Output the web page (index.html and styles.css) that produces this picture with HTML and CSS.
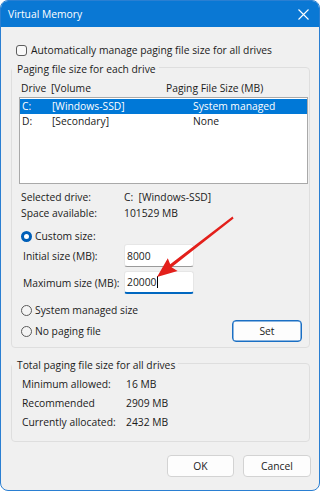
FILE: index.html
```html
<!DOCTYPE html>
<html>
<head>
<meta charset="utf-8">
<link rel="stylesheet" href="styles.css">
</head>
<body>
<div class="window">
  <div class="titlebar">
    <span class="title">Virtual Memory</span>
    <svg class="close" width="11" height="11" viewBox="0 0 11 11"><path d="M0.5 0.5 L10.5 10.5 M10.5 0.5 L0.5 10.5" stroke="#fff" stroke-width="1.1" fill="none"/></svg>
  </div>
  <div class="body">
    <div class="check-row"><span class="checkbox"></span><span>Automatically manage paging file size for all drives</span></div>

    <fieldset class="group g1">
      <legend>Paging file size for each drive</legend>
      <div class="group-body">
        <div class="cols header"><span>Drive</span><span>[Volume</span><span>Paging File Size (MB)</span></div>
        <div class="listbox">
          <div class="cols row selected"><span>C:</span><span>[Windows-SSD]</span><span>System managed</span></div>
          <div class="cols row"><span>D:</span><span>[Secondary]</span><span>None</span></div>
        </div>
        <div class="info">
          <span>Selected drive:</span><span>C:&nbsp; [Windows-SSD]</span>
          <span>Space available:</span><span>101529 MB</span>
        </div>
        <div class="radio-row custom"><span class="radio checked"></span><span>Custom size:</span></div>
        <div class="field first"><span class="field-label">Initial size (MB):</span><div class="input">8000</div></div>
        <div class="field second"><span class="field-label">Maximum size (MB):</span><div class="input focused">20000<span class="caret"></span></div></div>
        <div class="radio-row sys"><span class="radio"></span><span>System managed size</span></div>
        <div class="last-row">
          <div class="radio-row"><span class="radio"></span><span>No paging file</span></div>
          <button class="btn default">Set</button>
        </div>
      </div>
    </fieldset>

    <fieldset class="group g2">
      <legend>Total paging file size for all drives</legend>
      <div class="totals">
        <span>Minimum allowed:</span><span>16 MB</span>
        <span>Recommended</span><span>2909 MB</span>
        <span>Currently allocated:</span><span>2432 MB</span>
      </div>
    </fieldset>

    <div class="buttons">
      <button class="btn">OK</button>
      <button class="btn">Cancel</button>
    </div>
  </div>

  <svg class="arrow" width="320" height="491" viewBox="0 0 320 491">
    <path d="M232.5 216.6 L233.6 218.4 L171.6 267.2 L177.6 270.9 L157 277 L167.8 258.3 L170.2 264.2 Z" fill="#e3201b"/>
  </svg>
</div>
</body>
</html>
```

FILE: styles.css
```css
* { box-sizing: border-box; }
html, body { margin: 0; padding: 0; background: #ffffff; }
body {
  font-family: "Open Sans", "Noto Sans", sans-serif;
  font-size: 10.3px;
  color: #1b1b1b;
}
.window {
  position: relative;
  width: 320px;
  height: 491px;
  border: 1px solid #2a7fd2;
  border-radius: 8px;
  background: #f0f0f0;
  overflow: hidden;
}
.titlebar {
  height: 26px;
  background: #0a78d4;
  color: #ffffff;
  display: flex;
  align-items: center;
  justify-content: space-between;
  padding: 0 10px 0 7px;
  font-size: 10.3px;
}
.close { display: block; }
.body {
  padding: 0 9px 0 10px;
}
.check-row {
  margin: 15px 0 0 5px;
  height: 16px;
  display: flex;
  align-items: center;
  gap: 4px;
}
.checkbox {
  width: 11px;
  height: 11px;
  border: 1px solid #5d5d5d;
  border-radius: 3px;
  background: #f9f9f9;
}
.group {
  margin: 0;
  padding: 0;
  border: 1px solid #dedede;
  border-radius: 4px;
  min-width: 0;
}
.group legend {
  padding: 4px 3px 0 5px;
  line-height: 14px;
  margin: 0;
}
.group-body {
  padding: 5px 7px 5px 9px;
}
.cols {
  display: grid;
  grid-template-columns: 30px 115px 1fr;
  height: 14px;
  line-height: 14px;
  white-space: nowrap;
}
.listbox {
  margin: 2px -6px 0 -2px;
  height: 87px;
  border: 1px solid #a9a9a9;
  background: #ffffff;
  padding: 1px 0 0 0;
}
.row {
  grid-template-columns: 30px 141px 1fr;
  height: 15px;
  line-height: 15px;
  padding-left: 2px;
}
.row.selected {
  background: #0078d7;
  color: #ffffff;
}
.info {
  margin-top: 5px;
  display: grid;
  grid-template-columns: 103px 1fr;
  grid-auto-rows: 16px;
  line-height: 16px;
}
.radio-row {
  display: flex;
  align-items: center;
  gap: 3px;
  height: 16px;
}
.radio-row.custom { margin-top: 7px; }
.radio-row.sys { margin-top: 8px; }
.radio {
  width: 11px;
  height: 11px;
  border-radius: 50%;
  border: 1px solid #5a5a5a;
  background: #f4f4f4;
}
.radio.checked {
  border: 3px solid #005fb8;
  background: #ffffff;
}
.field {
  display: flex;
  align-items: center;
  height: 23px;
  padding-left: 2px;
}
.field.second { margin-top: 4px; }
.field-label { width: 101px; }
.input {
  width: 70px;
  height: 23px;
  background: #ffffff;
  border: 1px solid #e6e6e6;
  border-bottom: 1px solid #9a9a9a;
  border-radius: 3px;
  padding-left: 2px;
  display: flex;
  align-items: center;
}
.input.focused {
  border-bottom: 2px solid #0067c0;
}
.caret {
  display: inline-block;
  width: 1px;
  height: 12px;
  background: #000;
  margin-left: 1px;
}
.last-row {
  margin-top: 2px;
  height: 22px;
  display: flex;
  align-items: center;
  justify-content: space-between;
}
.btn {
  font: inherit;
  color: #1b1b1b;
  background: #fdfdfd;
  border: 1px solid #d3d3d3;
  border-radius: 4px;
  height: 22px;
  padding: 0;
}
.btn.default {
  width: 70px;
  border-color: #1a6fc4;
  box-shadow: inset 0 0 0 0.5px #1a6fc4;
}
.g2 { margin-top: 6px; }
.totals {
  padding: 3px 0 9px 10px;
  display: grid;
  grid-template-columns: 104px 1fr;
  grid-auto-rows: 19px;
  line-height: 19px;
}
.buttons {
  margin: 13px -1px 0 0;
  display: flex;
  justify-content: flex-end;
  gap: 9px;
}
.buttons .btn { width: 67px; }
.buttons .btn + .btn { width: 68px; }
.arrow {
  position: absolute;
  left: -1px;
  top: -1px;
  pointer-events: none;
}
```
